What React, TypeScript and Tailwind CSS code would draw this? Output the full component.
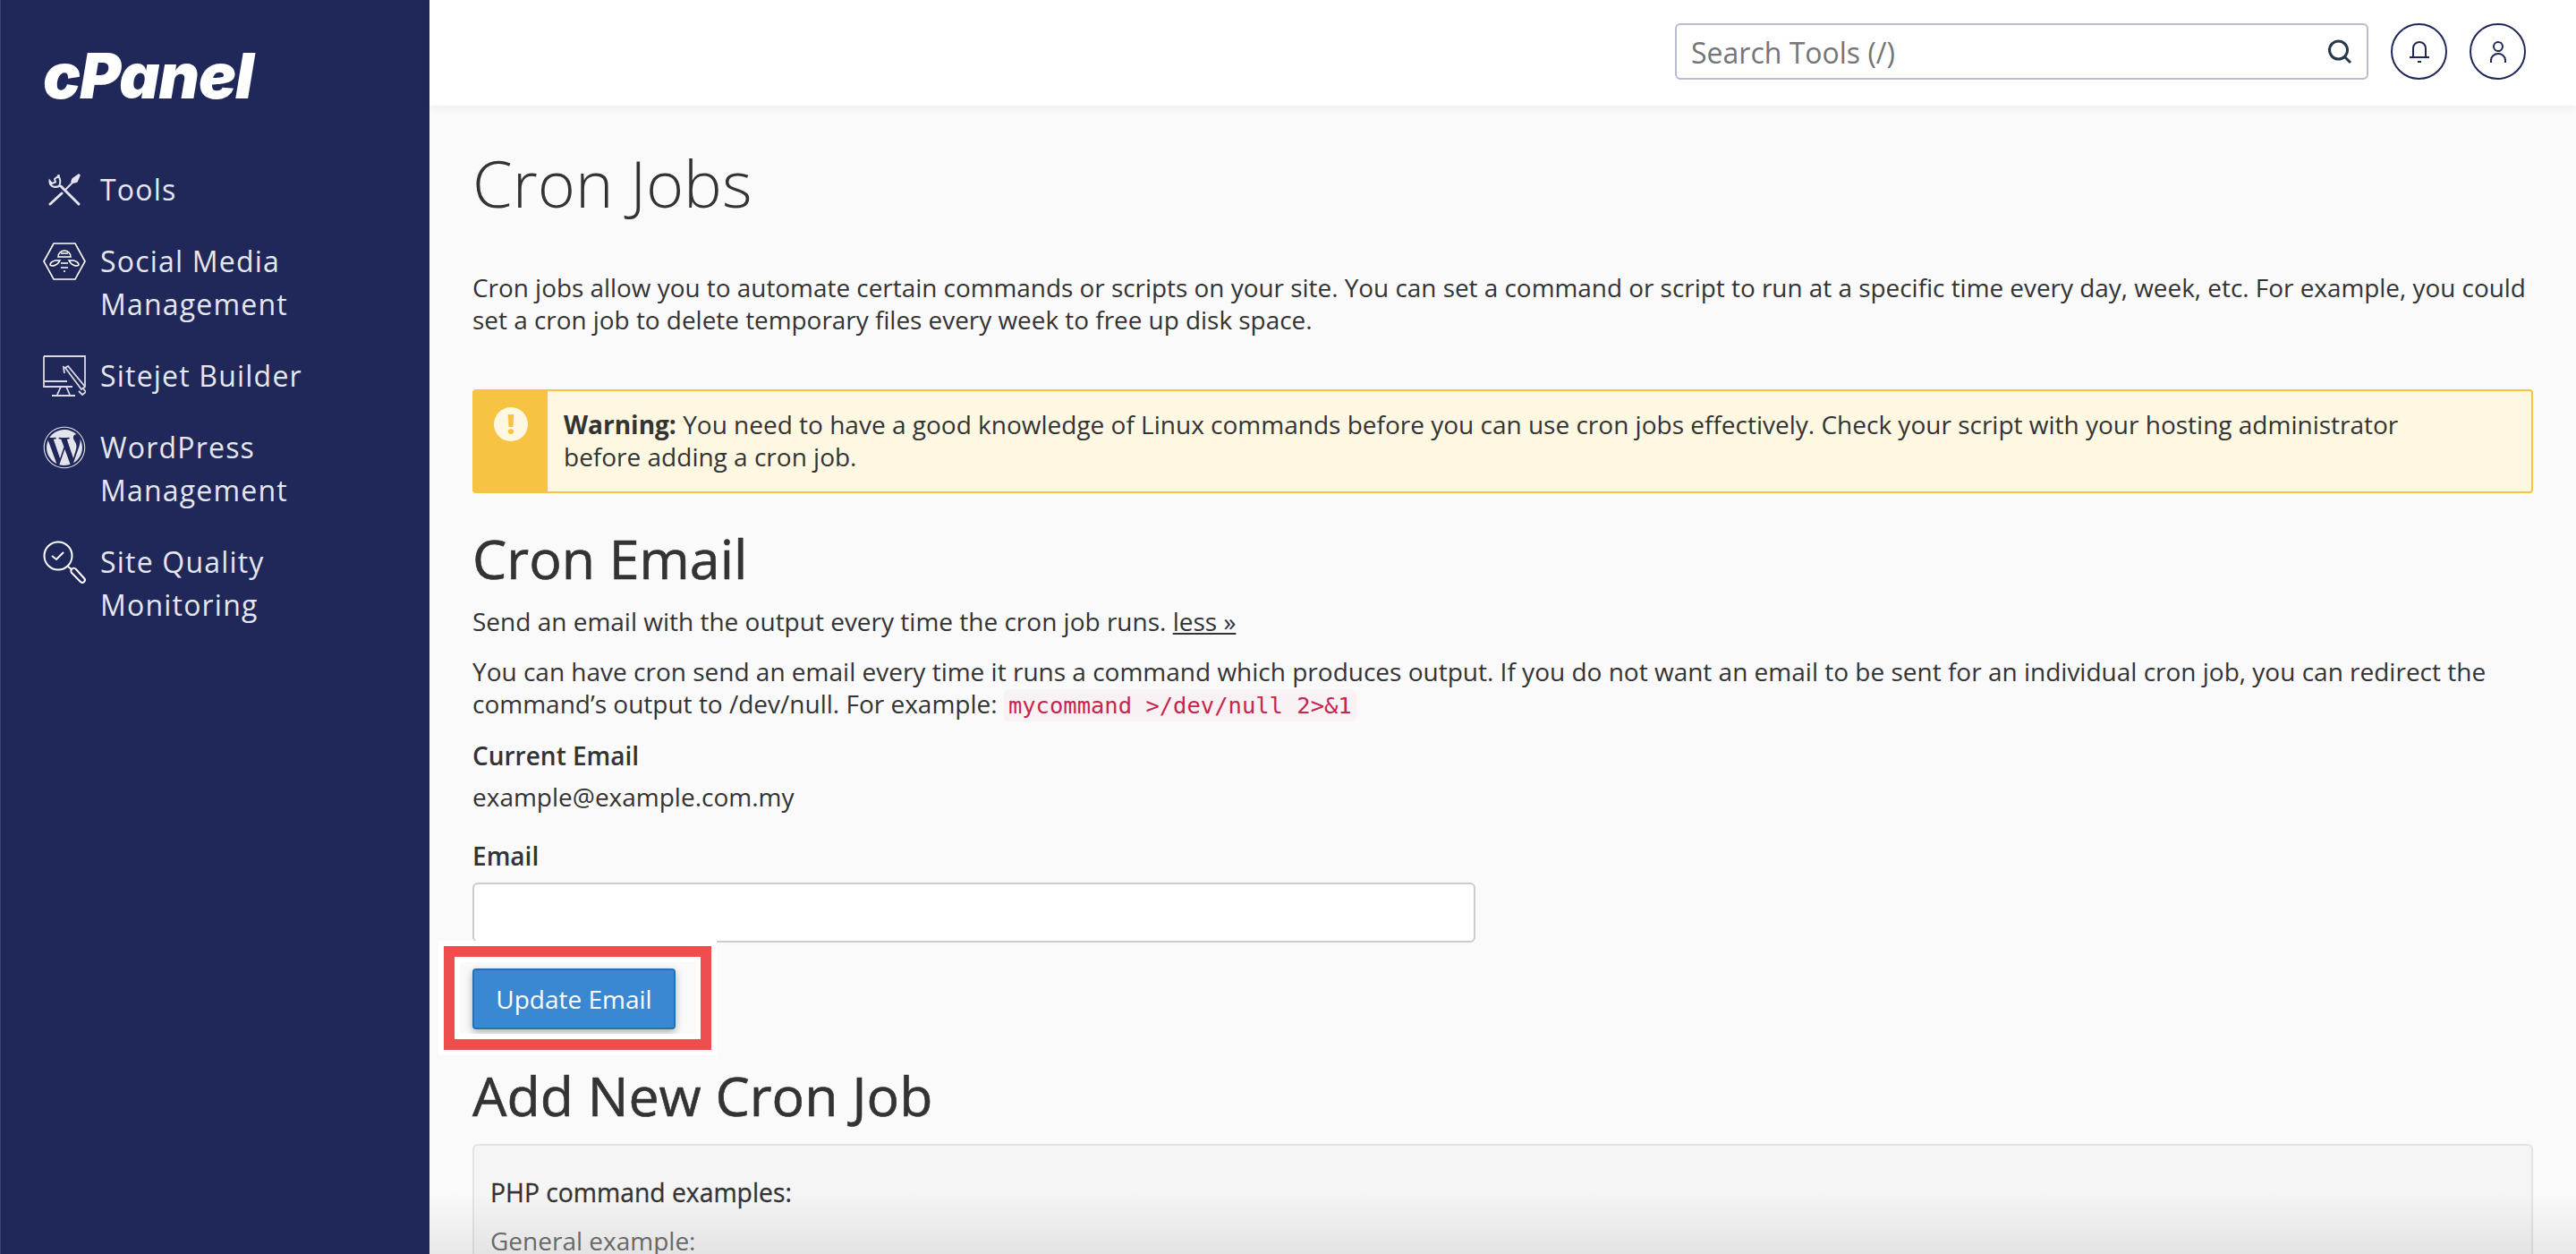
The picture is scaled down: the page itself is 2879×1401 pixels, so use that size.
import { FaWordpress } from 'react-icons/fa';
import type { ReactNode } from 'react';

function ToolsIcon() {
  return (
    <svg viewBox="0 0 36 36" className="w-[36px] h-[36px]" fill="none" stroke="#e4e5ec" strokeLinecap="round">
      <path d="M14 14l20 20" strokeWidth="3" />
      <path d="M2 34l13-12" strokeWidth="3" />
      <path d="M20 17l8-8" strokeWidth="2" />
      <path d="M26 9l1-3 7-5 1 1-3 7-3 1z" fill="#e4e5ec" strokeWidth="1.500" />
      <path d="M12 2L7 6l1 3.500L4 11 1.500 8C1 13 6 16.500 12 14c2-4 1-9-1-12" strokeWidth="2" />
    </svg>
  );
}

function SocialIcon() {
  return (
    <svg viewBox="0 0 48 42" className="w-[48px] h-[42px]" fill="none" stroke="#fff" strokeWidth="1.600">
      <path d="M1 21L12 1h24l11 20-11 20H12z" />
      <path d="M17 16a7 7 0 0 1 14 0zM20 12h8M14 20c-4 1-6 3-6 5 2 2 8 1 11-5zM34 20c4 1 6 3 6 5-2 2-8 1-11-5zM20 23h8M20 28h8M23 32h2" />
    </svg>
  );
}

function SitejetIcon() {
  return (
    <svg viewBox="0 0 48 46" className="w-[48px] h-[46px]" fill="none" stroke="#d8d9e2" strokeWidth="1.800">
      <path d="M1 1h46v33M1 1v34h32M1 29h26M20 35l-4 9M26 35l4 9M10 45h26" />
      <path d="M25 14l18 24 4-3-19-23z M25 14l-2-1 1 7" fill="#20285a" />
      <path d="M40 40l4 4 4-3-3-4" />
    </svg>
  );
}

function QualityIcon() {
  return (
    <svg viewBox="0 0 48 48" className="w-[48px] h-[48px]" fill="none" stroke="#fff" strokeWidth="2">
      <circle cx="17" cy="17" r="15.500" />
      <path d="M10 17l5 4 8-8" />
      <path d="M28 29l4 3M32 32c2-2 3-2 5 0l9 10c2 2 1 3 0 4s-2 2-4 0l-10-10c-1-2-1-3 0-4z" />
    </svg>
  );
}

function NavItem({ icon, children }: { icon: ReactNode; children: ReactNode }) {
  return (
    <li className="flex gap-[16px]">
      <span className="w-[48px] h-[48px] shrink-0 flex items-center justify-center">{icon}</span>
      <span className="text-[32px] leading-[48px] tracking-[1.200px] text-[#e6e7ee]">{children}</span>
    </li>
  );
}

export default function App() {
  return (
    <div className="flex w-[2879px] h-[1401px] overflow-hidden relative bg-[#fafafa] text-[#333] font-['Open_Sans',sans-serif] text-[28px] leading-[36px]">
      <aside className="w-[480px] shrink-0 bg-[#20285a] border-l border-[#3a4170] pl-[47px]">
        <div className="h-[188px] pt-[46px]">
          <span className="block italic font-black text-white text-[70px] leading-[78px] tracking-[-1px] font-['Inter',sans-serif]">cPanel</span>
        </div>
        <ul className="flex flex-col gap-[32px]">
          <NavItem icon={<ToolsIcon />}>Tools</NavItem>
          <NavItem icon={<SocialIcon />}>Social Media<br />Management</NavItem>
          <NavItem icon={<SitejetIcon />}>Sitejet Builder</NavItem>
          <NavItem icon={<FaWordpress className="w-[48px] h-[48px] text-[#e4e5ec]" />}>WordPress<br />Management</NavItem>
          <NavItem icon={<QualityIcon />}>Site Quality<br />Monitoring</NavItem>
        </ul>
      </aside>

      <div className="flex-1 min-w-0 flex flex-col">
        <header className="h-[118px] shrink-0 bg-white shadow-[0_2px_10px_rgba(0,0,0,0.06)] flex items-center justify-end pr-[56px] pb-[3px] gap-[25px]">
          <div className="w-[775px] h-[63px] border-2 border-[#b9bbcf] rounded-[6px] flex items-center pl-[16px] pr-[16px] bg-white">
            <input placeholder="Search Tools (/)" className="flex-1 min-w-0 outline-none text-[32px] pt-[2px] placeholder:text-[#757575]" />
            <svg viewBox="0 0 28 28" className="w-[28px] h-[28px]" fill="none" stroke="#26384a" strokeWidth="3">
              <circle cx="12.500" cy="12" r="10" />
              <path d="M19 19l7 7" />
            </svg>
          </div>
          <div className="w-[63px] h-[63px] rounded-full border-2 border-[#20285a] flex items-center justify-center">
            <svg viewBox="0 0 24 26" className="w-[24px] h-[26px]" fill="none" stroke="#20285a" strokeWidth="2">
              <path d="M5 18V9a7 7 0 0 1 14 0v9M1 19h22M10 24h4" />
            </svg>
          </div>
          <div className="w-[63px] h-[63px] rounded-full border-2 border-[#20285a] flex items-center justify-center">
            <svg viewBox="0 0 20 26" className="w-[20px] h-[26px]" fill="none" stroke="#20285a" strokeWidth="2">
              <circle cx="10" cy="7" r="5" />
              <path d="M2 25v-3c0-4 4-7 8-7s8 3 8 7v3" />
            </svg>
          </div>
        </header>

        <main className="px-[48px]">
          <h1 className="font-light text-[72px] leading-[72px] mt-[50px]">Cron Jobs</h1>
          <p className="mt-[63px] text-[27.900px]">
            Cron jobs allow you to automate certain commands or scripts on your site. You can set a command or script to run at a specific time every day, week, etc. For example, you could set a cron job to delete temporary files every week to free up disk space.
          </p>

          <div className="mt-[60px] flex h-[116px] rounded-[4px] border-2 border-[#f6c342] bg-[#fef8e2]">
            <div className="w-[82px] shrink-0 bg-[#f6c342] flex justify-center pt-[18px]">
              <div className="w-[38px] h-[38px] rounded-full bg-[#fef8e2] flex items-center justify-center text-[#f6c342] text-[30px] font-extrabold leading-none">!</div>
            </div>
            <p className="pl-[18px] pt-[19px] pr-[120px]">
              <strong>Warning:</strong> You need to have a good knowledge of Linux commands before you can use cron jobs effectively. Check your script with your hosting administrator before adding a cron job.
            </p>
          </div>

          <h2 className="text-[60.800px] leading-[60px] [-webkit-text-stroke:0.6px_#333] mt-[43px]">Cron Email</h2>
          <p className="mt-[22px]">
            Send an email with the output every time the cron job runs. <a className="underline">less »</a>
          </p>
          <p className="mt-[20px]">
            You can have cron send an email every time it runs a command which produces output. If you do not want an email to be sent for an individual cron job, you can redirect the command’s output to /dev/null. For example:{' '}
            <code className="font-['DejaVu_Sans_Mono',monospace] text-[25.500px] text-[#c7254e] bg-[#f9f2f4] rounded-[6px] px-[5px] py-[3px]">mycommand &gt;/dev/null 2&gt;&amp;1</code>
          </p>
          <div className="mt-[20px] font-semibold">Current Email</div>
          <div className="mt-[10px]">example@example.com.my</div>
          <label className="block mt-[30px] font-semibold">Email</label>
          <input className="block mt-[12px] w-[1121px] h-[67px] bg-white border-2 border-[#ccc] rounded-[6px] outline-none" />
          <button className="block mt-[29px] w-[227px] h-[68px] bg-[#3a87d2] border-2 border-[#2b6fb3] rounded-[4px] text-white shadow-[0_3px_8px_rgba(0,0,0,0.3)]">Update Email</button>
          <h2 className="text-[60.800px] leading-[60px] [-webkit-text-stroke:0.6px_#333] mt-[44px]">Add New Cron Job</h2>
          <div className="mt-[24px] h-[300px] bg-[#f5f5f5] border-2 border-[#e3e3e3] rounded-[6px] px-[18px] pt-[34px]">
            <div className="text-[28.300px] [-webkit-text-stroke:0.3px_#333]">PHP command examples:</div>
            <div className="mt-[18px] text-[#6f6f6f]">General example:</div>
          </div>
        </main>
      </div>

      <div className="absolute left-[490px] top-[1051px] w-[311px] h-[128px] border-[6px] border-white pointer-events-none">
        <div className="w-full h-full border-[12px] border-[#ee4e4e]">
          <div className="w-full h-full border-[6px] border-white" />
        </div>
      </div>
      <div className="absolute left-[480px] right-0 bottom-0 h-[70px] bg-gradient-to-b from-transparent to-[rgba(0,0,0,0.07)] pointer-events-none" />
    </div>
  );
}
